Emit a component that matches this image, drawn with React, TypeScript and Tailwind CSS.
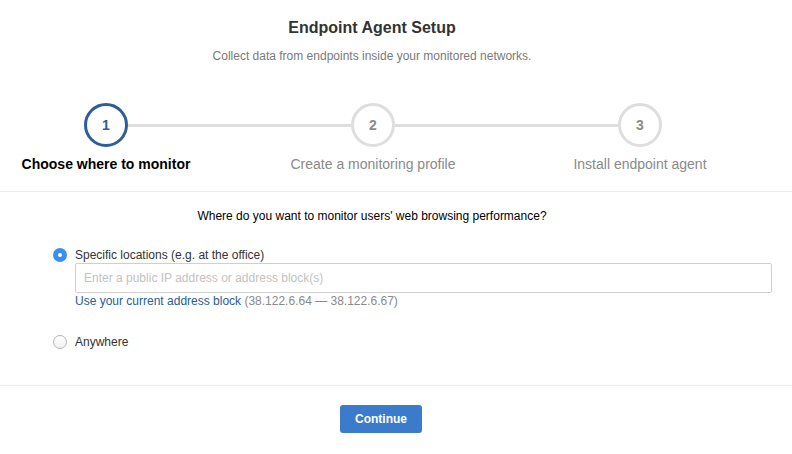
import React, { useState } from 'react';

const steps = [
  { n: 1, label: 'Choose where to monitor' },
  { n: 2, label: 'Create a monitoring profile' },
  { n: 3, label: 'Install endpoint agent' },
];

function StepCircle({ n, active }: { n: number; active: boolean }) {
  return (
    <div
      className={`w-[44px] h-[44px] shrink-0 rounded-full border-[3px] flex items-center justify-center text-[14px] font-bold ${
        active ? 'border-[#2d5e9b] text-[#2f5c9c]' : 'border-[#dedede] text-[#8a8a8a]'
      }`}
    >
      {n}
    </div>
  );
}

function Radio({ checked, onClick }: { checked: boolean; onClick: () => void }) {
  return (
    <button
      type="button"
      onClick={onClick}
      className={`w-[14px] h-[14px] shrink-0 rounded-full flex items-center justify-center ${
        checked ? 'bg-[#3b8ef0]' : 'bg-gradient-to-b from-white to-[#f2f2f2] border border-[#b5b5b5]'
      }`}
    >
      {checked && <span className="w-[4px] h-[4px] rounded-full bg-white" />}
    </button>
  );
}

export default function App() {
  const [where, setWhere] = useState<'specific' | 'anywhere'>('specific');
  const [ip, setIp] = useState('');

  return (
    <div className="w-[792px] h-[454px] bg-white font-['Liberation_Sans',Arial,sans-serif] text-[#333]">
      {/* Header */}
      <div className="w-[744px] pt-[18px] text-center">
        <h1 className="text-[16px] leading-[20px] font-bold text-[#333]">Endpoint Agent Setup</h1>
        <p className="mt-[10px] text-[12px] leading-[16px] text-[#7a7a7a]">
          Collect data from endpoints inside your monitored networks.
        </p>
      </div>

      {/* Stepper */}
      <div className="mt-[39px] pl-[84px] w-[662px] flex items-center">
        <StepCircle n={1} active />
        <div className="flex-1 h-[3px] bg-[#dedede]" />
        <StepCircle n={2} active={false} />
        <div className="flex-1 h-[3px] bg-[#dedede]" />
        <StepCircle n={3} active={false} />
      </div>
      <div className="mt-[8px] ml-[6px] flex gap-[67px]">
        {steps.map((s) => (
          <div
            key={s.n}
            className={`w-[200px] text-center text-[14px] leading-[18px] ${
              s.n === 1 ? 'font-bold text-black' : 'text-[#8a8a8a]'
            }`}
          >
            {s.label}
          </div>
        ))}
      </div>

      {/* Body */}
      <div className="mt-[18px] border-t border-[#ececec]">
        <p className="w-[744px] pt-[16px] text-center text-[12px] leading-[16px] text-black">
          Where do you want to monitor users' web browsing performance?
        </p>

        <div className="mt-[23px] pl-[53px] pr-[20px]">
          <label className="flex items-center gap-[8px] h-[16px] text-[12px] text-[#333]">
            <Radio checked={where === 'specific'} onClick={() => setWhere('specific')} />
            <span>Specific locations (e.g. at the office)</span>
          </label>
          <div className="pl-[22px]">
            <input
              type="text"
              value={ip}
              onChange={(e) => setIp(e.target.value)}
              placeholder="Enter a public IP address or address block(s)"
              className="w-full h-[30px] px-[8px] border border-[#cfcfcf] rounded-[2px] text-[12px] text-[#333] placeholder:text-[#c2c2c2] outline-none focus:border-[#3b8ef0]"
            />
            <div className="text-[12px] leading-[16px]">
              <a href="#" className="text-[#2a5b9c]">
                Use your current address block
              </a>{' '}
              <span className="text-[#8a8a8a]">(38.122.6.64 — 38.122.6.67)</span>
            </div>
          </div>

          <label className="mt-[25px] flex items-center gap-[8px] h-[16px] text-[12px] text-[#333]">
            <Radio checked={where === 'anywhere'} onClick={() => setWhere('anywhere')} />
            <span>Anywhere</span>
          </label>
        </div>

        <div className="mt-[35px] border-t border-[#ececec] pt-[19px]">
          <div className="w-[762px] flex justify-center">
            <button
              type="button"
              className="w-[82px] h-[28px] rounded-[3px] bg-[#3b7bcb] text-white text-[12px] font-bold"
            >
              Continue
            </button>
          </div>
        </div>
      </div>
    </div>
  );
}
